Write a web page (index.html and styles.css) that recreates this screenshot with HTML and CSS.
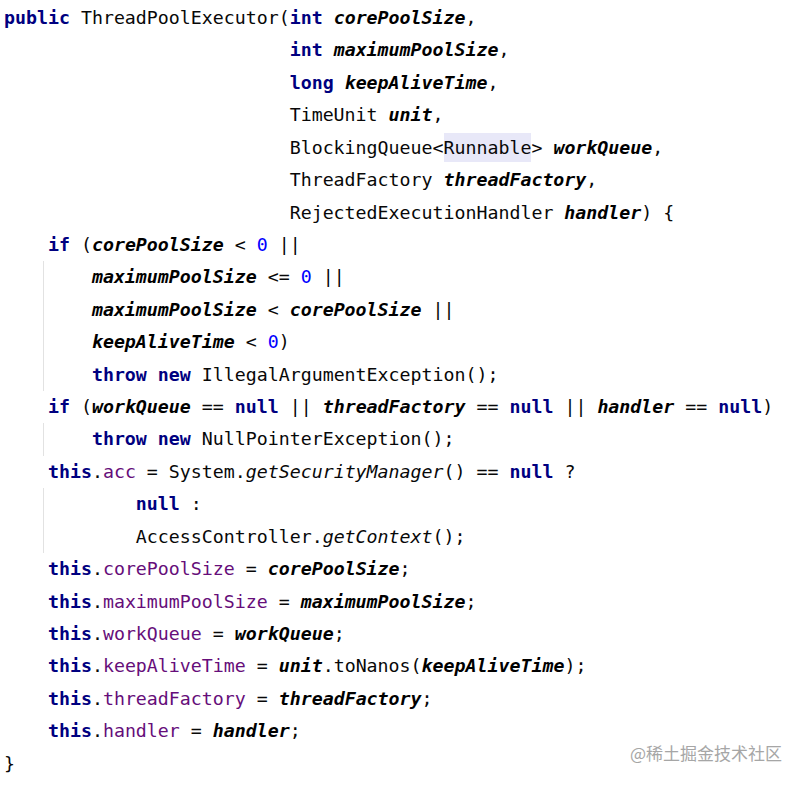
FILE: index.html
```html
<!DOCTYPE html>
<html>
<head>
<meta charset="utf-8">
<link rel="stylesheet" href="styles.css">
</head>
<body>
<div class="code">
<div class="ln"><span class="k">public</span> ThreadPoolExecutor(<span class="k">int</span> <span class="p">corePoolSize</span>,</div>
<div class="ln">                          <span class="k">int</span> <span class="p">maximumPoolSize</span>,</div>
<div class="ln">                          <span class="k">long</span> <span class="p">keepAliveTime</span>,</div>
<div class="ln">                          TimeUnit <span class="p">unit</span>,</div>
<div class="ln">                          BlockingQueue&lt;<span class="hl">Runnable</span>&gt; <span class="p">workQueue</span>,</div>
<div class="ln">                          ThreadFactory <span class="p">threadFactory</span>,</div>
<div class="ln">                          RejectedExecutionHandler <span class="p">handler</span>) {</div>
<div class="ln">    <span class="k">if</span> (<span class="p">corePoolSize</span> &lt; <span class="n">0</span> ||</div>
<div class="ln g">        <span class="p">maximumPoolSize</span> &lt;= <span class="n">0</span> ||</div>
<div class="ln g">        <span class="p">maximumPoolSize</span> &lt; <span class="p">corePoolSize</span> ||</div>
<div class="ln g">        <span class="p">keepAliveTime</span> &lt; <span class="n">0</span>)</div>
<div class="ln g">        <span class="k">throw new</span> IllegalArgumentException();</div>
<div class="ln">    <span class="k">if</span> (<span class="p">workQueue</span> == <span class="k">null</span> || <span class="p">threadFactory</span> == <span class="k">null</span> || <span class="p">handler</span> == <span class="k">null</span>)</div>
<div class="ln g">        <span class="k">throw new</span> NullPointerException();</div>
<div class="ln">    <span class="k">this</span>.<span class="f">acc</span> = System.<span class="s">getSecurityManager</span>() == <span class="k">null</span> ?</div>
<div class="ln g">            <span class="k">null</span> :</div>
<div class="ln g">            AccessController.<span class="s">getContext</span>();</div>
<div class="ln">    <span class="k">this</span>.<span class="f">corePoolSize</span> = <span class="p">corePoolSize</span>;</div>
<div class="ln">    <span class="k">this</span>.<span class="f">maximumPoolSize</span> = <span class="p">maximumPoolSize</span>;</div>
<div class="ln">    <span class="k">this</span>.<span class="f">workQueue</span> = <span class="p">workQueue</span>;</div>
<div class="ln">    <span class="k">this</span>.<span class="f">keepAliveTime</span> = <span class="p">unit</span>.toNanos(<span class="p">keepAliveTime</span>);</div>
<div class="ln">    <span class="k">this</span>.<span class="f">threadFactory</span> = <span class="p">threadFactory</span>;</div>
<div class="ln">    <span class="k">this</span>.<span class="f">handler</span> = <span class="p">handler</span>;</div>
<div class="ln">}</div>
</div>
<div class="wm">@稀土掘金技术社区</div>
</body>
</html>
```
FILE: styles.css
```css
html, body {
  margin: 0;
  padding: 0;
  background: #ffffff;
}
body {
  width: 802px;
  height: 785px;
  overflow: hidden;
}
.code {
  padding: 2px 0 0 4px;
  font-family: "DejaVu Sans Mono", "Liberation Mono", monospace;
  font-size: 18.25px;
  color: #080808;
}
.ln {
  white-space: pre;
  height: 32.43px;
  line-height: 32.43px;
}
.g {
  background: linear-gradient(#e2e2e2, #e2e2e2) no-repeat 39px 0 / 1px 100%;
}
.k {
  color: #000080;
  font-weight: bold;
}
.f {
  color: #660e7a;
}
.p {
  font-weight: bold;
  font-style: italic;
  color: #000000;
}
.n {
  color: #0000ff;
}
.s {
  font-style: italic;
}
.hl {
  background: #e8e8f8;
  padding: 4px 0;
}
.wm {
  position: absolute;
  left: 630px;
  top: 741px;
  font-family: "Noto Sans CJK SC", sans-serif;
  font-size: 17px;
  line-height: 24px;
  color: #a6a6a6;
}
```
